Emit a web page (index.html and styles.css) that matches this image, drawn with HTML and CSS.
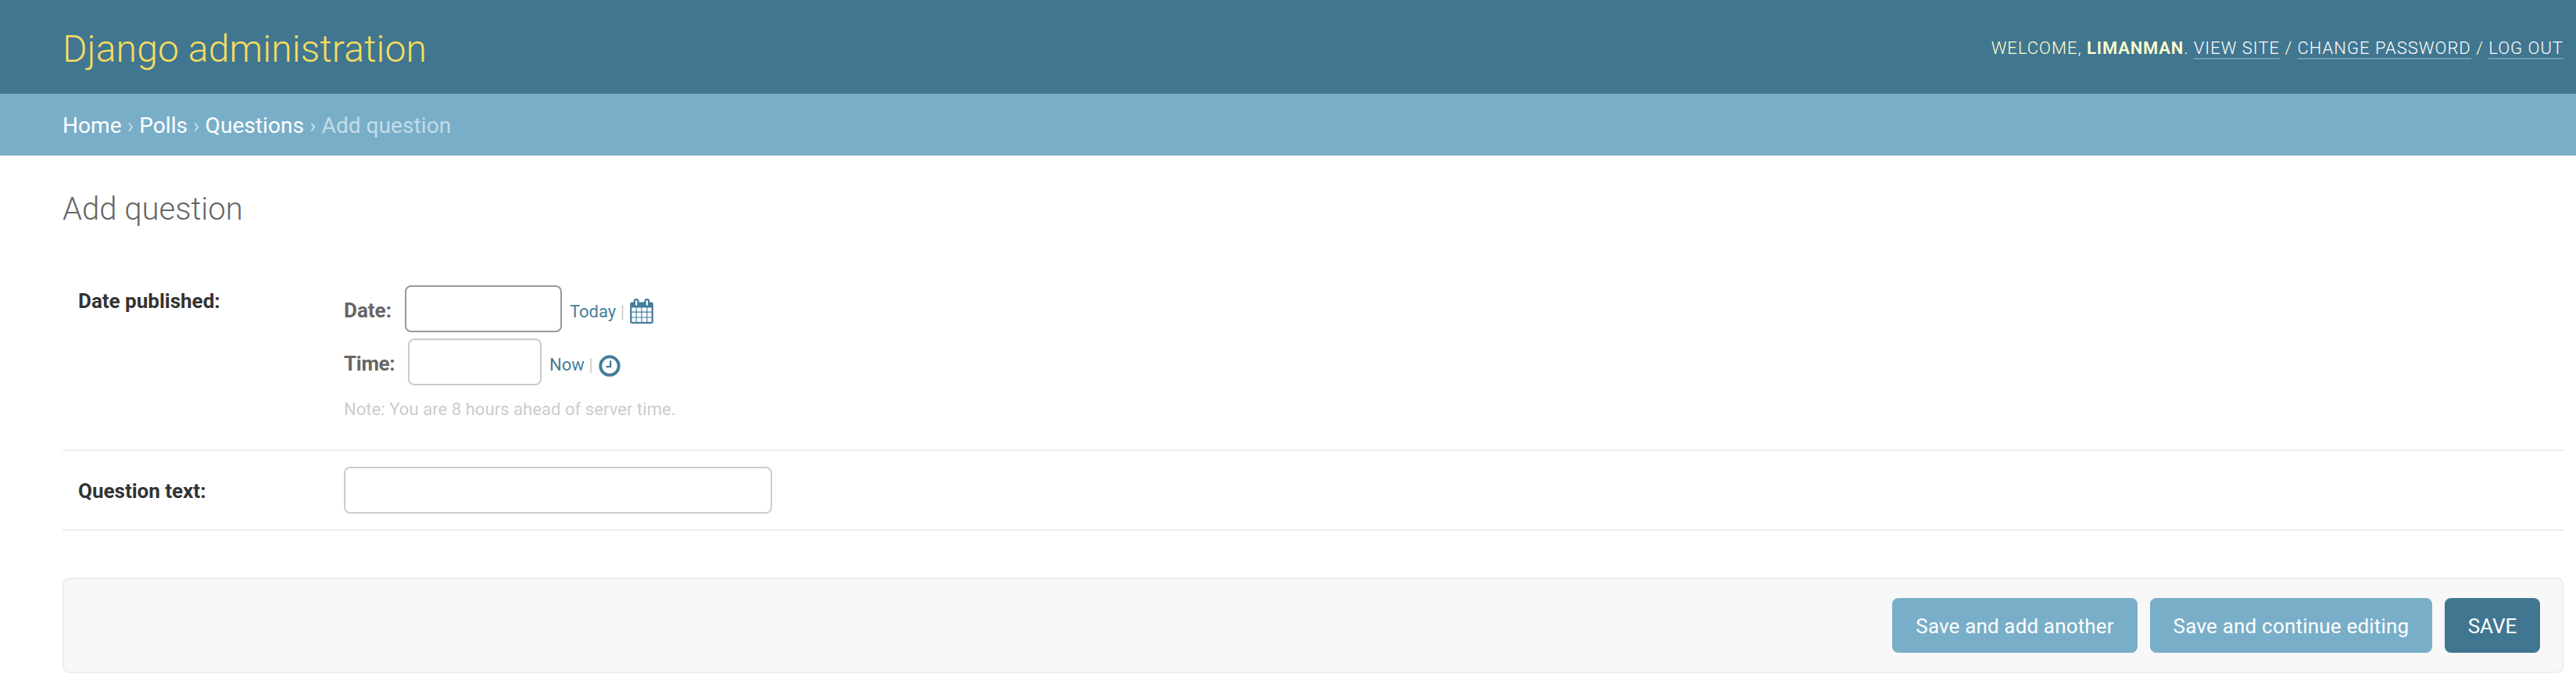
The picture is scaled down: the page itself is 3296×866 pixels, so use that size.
FILE: index.html
```html
<!DOCTYPE html>
<html lang="en">
<head>
<meta charset="utf-8">
<title>Add question | Django site admin</title>
<link rel="stylesheet" href="styles.css">
</head>
<body>
<header class="header">
  <div class="site-name">Django administration</div>
  <div class="user-tools">Welcome, <strong>limanman</strong>. <a>View site</a> / <a>Change password</a> / <a>Log out</a></div>
</header>
<nav class="breadcrumbs"><a>Home</a> › <a>Polls</a> › <a>Questions</a> › Add question</nav>
<main class="content">
  <h1 class="title">Add question</h1>
  <form>
    <div class="form-row form-row-datetime">
      <div class="label">Date published:</div>
      <div class="datetime">
        <div class="line">
          <label class="sub-label date-label" for="date">Date:</label>
          <input class="field date-field" id="date" type="text">
          <span class="shortcuts"><a>Today</a> | </span>
          <svg class="icon calendar-icon" viewBox="0 0 1792 1792"><path d="M192 1664h288v-288h-288v288zm352 0h320v-288h-320v288zm-352-352h288v-320h-288v320zm352 0h320v-320h-320v320zm-352-384h288v-288h-288v288zm736 736h320v-288h-320v288zm-384-736h320v-288h-320v288zm768 736h288v-288h-288v288zm-384-352h320v-320h-320v320zm-352-864v-288q0-13-9.500-22.500t-22.500-9.500h-64q-13 0-22.500 9.500t-9.500 22.500v288q0 13 9.500 22.500t22.500 9.500h64q13 0 22.500-9.500t9.500-22.500zm736 864h288v-320h-288v320zm-384-384h320v-288h-320v288zm384 0h288v-288h-288v288zm32-480v-288q0-13-9.500-22.500t-22.500-9.500h-64q-13 0-22.500 9.500t-9.500 22.500v288q0 13 9.500 22.500t22.500 9.500h64q13 0 22.500-9.500t9.500-22.500zm384-64v1280q0 52-38 90t-90 38h-1408q-52 0-90-38t-38-90v-1280q0-52 38-90t90-38h128v-96q0-66 47-113t113-47h64q66 0 113 47t47 113v96h384v-96q0-66 47-113t113-47h64q66 0 113 47t47 113v96h128q52 0 90 38t38 90z"/></svg>
        </div>
        <div class="line">
          <label class="sub-label time-label" for="time">Time:</label>
          <input class="field time-field" id="time" type="text">
          <span class="shortcuts"><a>Now</a> | </span>
          <svg class="icon clock-icon" viewBox="0 0 1792 1792"><path d="M1024 544v448q0 14-9 23t-23 9h-320q-14 0-23-9t-9-23v-64q0-14 9-23t23-9h224v-352q0-14 9-23t23-9h64q14 0 23 9t9 23zm416 352q0-148-73-273t-198-198-273-73-273 73-198 198-73 273 73 273 198 198 273 73 273-73 198-198 73-273zm224 0q0 209-103 385.500t-279.500 279.500-385.500 103-385.500-103-279.500-279.500-103-385.500 103-385.500 279.500-279.500 385.500-103 385.500 103 279.500 279.500 103 385.500z"/></svg>
        </div>
        <div class="note">Note: You are 8 hours ahead of server time.</div>
      </div>
    </div>
    <div class="form-row form-row-text">
      <label class="label" for="question">Question text:</label>
      <input class="field text-field" id="question" type="text">
    </div>
    <div class="submit-row">
      <button class="button button-another" type="button">Save and add another</button>
      <button class="button button-continue" type="button">Save and continue editing</button>
      <button class="button button-default" type="button">SAVE</button>
    </div>
  </form>
</main>
</body>
</html>
```

FILE: styles.css
```css
* { box-sizing: border-box; }

body {
  margin: 0;
  background: #fff;
  color: #333;
  font-family: Roboto, "Liberation Sans", sans-serif;
  font-size: 26px;
}

.header {
  display: flex;
  justify-content: space-between;
  height: 120px;
  padding: 0 16px 0 80px;
  background: #417690;
  color: #ffc;
}

.site-name {
  color: #f5dd5d;
  font-size: 48px;
  font-weight: 300;
  line-height: 125px;
  letter-spacing: .15px;
}

.user-tools {
  padding-top: 45px;
  font-size: 22px;
  font-weight: 300;
  line-height: 34px;
  letter-spacing: 1px;
  text-transform: uppercase;
}

.user-tools strong {
  font-weight: 600;
  letter-spacing: .8px;
}

.user-tools a {
  color: #fff;
  border-bottom: 2px solid rgba(255, 255, 255, .25);
}

.breadcrumbs {
  height: 79px;
  padding: 0 80px;
  background: #79aec8;
  color: #c4dce8;
  font-size: 28px;
  line-height: 81px;
  letter-spacing: .07px;
}

.breadcrumbs a { color: #fff; }

.content { padding: 40px 16px 0 80px; }

.title {
  margin: 0;
  height: 106px;
  color: #666;
  font-size: 40px;
  font-weight: 300;
  line-height: 58px;
}

.form-row {
  display: grid;
  grid-template-columns: 340px 1fr;
  padding-left: 20px;
  border-bottom: 2px solid #eee;
}

.form-row-datetime {
  height: 232px;
  padding-top: 20px;
}

.form-row-text {
  height: 102px;
  padding-top: 20px;
}

.label {
  font-weight: 700;
  line-height: 40px;
}

.form-row-text .label { padding-top: 11px; }

.line {
  display: flex;
  height: 60px;
  margin-bottom: 8px;
}

.sub-label {
  color: #666;
  font-weight: 700;
  line-height: 64px;
}

.date-label { width: 78px; }

.time-label {
  width: 82px;
  letter-spacing: -.3px;
}

.field {
  height: 60px;
  margin: 0;
  padding: 10px 12px;
  border: 2px solid #ccc;
  border-radius: 8px;
  outline: 0;
  background: #fff;
  color: #333;
  font: inherit;
}

.date-field {
  width: 201px;
  border-color: #999;
}

.time-field { width: 171px; }
.text-field { width: 548px; }

.shortcuts {
  padding-left: 10px;
  color: #ccc;
  font-size: 22px;
  line-height: 67px;
  white-space: pre;
}

.shortcuts a { color: #447e9b; }

.icon {
  width: 32px;
  height: 32px;
  fill: #447e9b;
}

.calendar-icon { margin-top: 17px; }
.clock-icon { margin-top: 19px; }

.note {
  color: #ccc;
  font-size: 22px;
  line-height: 46px;
  letter-spacing: .06px;
}

.submit-row {
  display: flex;
  justify-content: flex-end;
  gap: 16px;
  height: 122px;
  margin-top: 60px;
  padding: 24px 28px;
  border: 2px solid #eee;
  border-radius: 8px;
  background: #f8f8f8;
}

.button {
  height: 70px;
  padding: 0;
  border: 0;
  border-radius: 8px;
  background: #79aec8;
  color: #fff;
  font: inherit;
  line-height: 72px;
  text-align: center;
}

.button-another {
  width: 314px;
  letter-spacing: .15px;
}

.button-continue {
  width: 361px;
  letter-spacing: .2px;
}

.button-default {
  width: 122px;
  background: #417690;
}
```
